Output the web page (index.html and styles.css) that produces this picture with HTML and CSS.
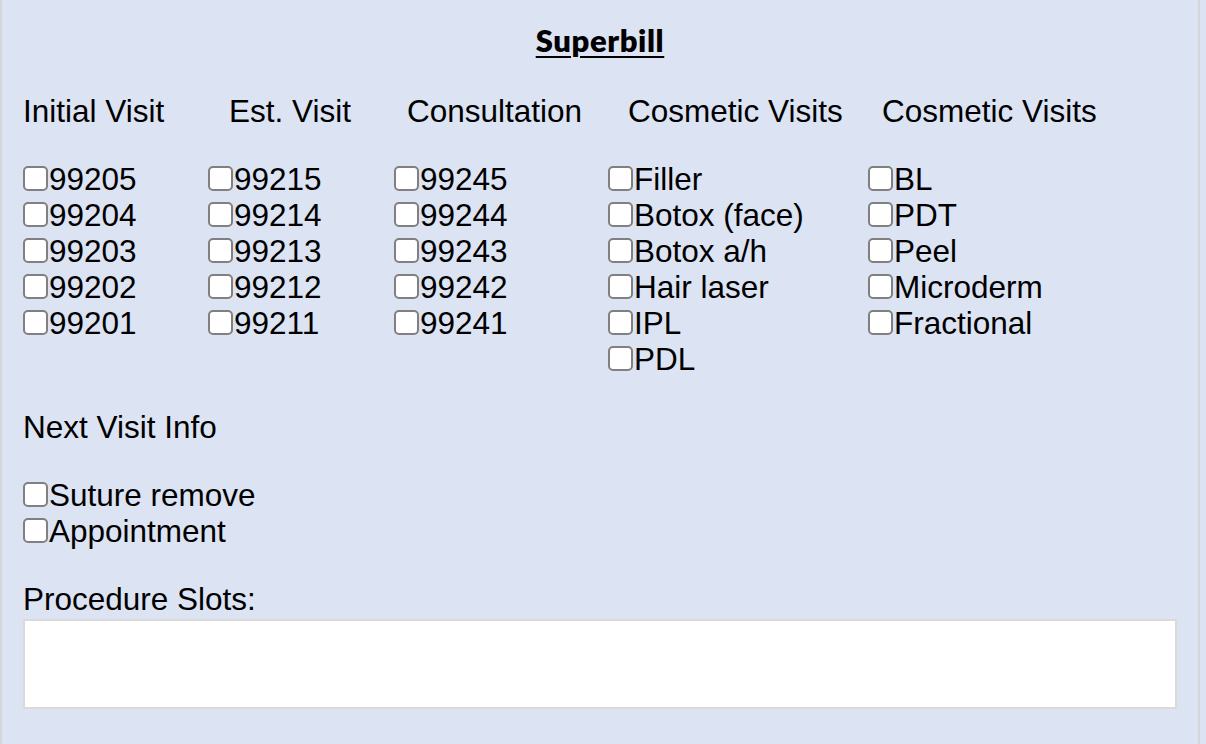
FILE: index.html
```html
<!DOCTYPE html>
<html lang="en">
<head>
  <meta charset="UTF-8">
  <meta name="viewport" content="width=device-width, initial-scale=1.0">
  <title>Superbill</title>
  <link rel="stylesheet" href="styles.css">
</head>
<body>
  <div class="panel">
    <h2 class="title">Superbill</h2>

    <!-- Visit codes -->
    <div class="heads">
      <div>Initial Visit</div>
      <div>Est. Visit</div>
      <div>Consultation</div>
      <div>Cosmetic Visits</div>
      <div>Cosmetic Visits</div>
    </div>

    <div class="codes">
      <div class="col">
        <label><input type="checkbox">99205</label>
        <label><input type="checkbox">99204</label>
        <label><input type="checkbox">99203</label>
        <label><input type="checkbox">99202</label>
        <label><input type="checkbox">99201</label>
      </div>
      <div class="col">
        <label><input type="checkbox">99215</label>
        <label><input type="checkbox">99214</label>
        <label><input type="checkbox">99213</label>
        <label><input type="checkbox">99212</label>
        <label><input type="checkbox">99211</label>
      </div>
      <div class="col">
        <label><input type="checkbox">99245</label>
        <label><input type="checkbox">99244</label>
        <label><input type="checkbox">99243</label>
        <label><input type="checkbox">99242</label>
        <label><input type="checkbox">99241</label>
      </div>
      <div class="col">
        <label><input type="checkbox">Filler</label>
        <label><input type="checkbox">Botox (face)</label>
        <label><input type="checkbox">Botox a/h</label>
        <label><input type="checkbox">Hair laser</label>
        <label><input type="checkbox">IPL</label>
        <label><input type="checkbox">PDL</label>
      </div>
      <div class="col">
        <label><input type="checkbox">BL</label>
        <label><input type="checkbox">PDT</label>
        <label><input type="checkbox">Peel</label>
        <label><input type="checkbox">Microderm</label>
        <label><input type="checkbox">Fractional</label>
      </div>
    </div>

    <!-- Next visit -->
    <div class="section">Next Visit Info</div>
    <div class="col next">
      <label><input type="checkbox">Suture remove</label>
      <label><input type="checkbox">Appointment</label>
    </div>

    <div class="section">Procedure Slots:</div>
    <textarea class="slots"></textarea>
  </div>
</body>
</html>
```

FILE: styles.css
```css
body {
  margin: 0;
  background-color: #dce3f2;
  font-family: "Liberation Sans", Arial, sans-serif;
  font-size: 31.5px;
  line-height: 36px;
  color: #000;
}
.panel {
  width: 1154px;
  min-height: 744px;
  padding: 22px 21px 0 21px;
  border-left: 2px solid #d4d6dc;
  border-right: 2px solid #d4d6dc;
  box-sizing: content-box;
}
.title {
  margin: 0;
  text-align: center;
  font-family: Lato, "Open Sans", sans-serif;
  font-weight: 800;
  font-size: 31px;
  letter-spacing: 0.6px;
  line-height: 36px;
  text-decoration: underline;
  text-underline-offset: 4px;
  text-decoration-thickness: 2px;
}
.heads {
  display: grid;
  grid-template-columns: 206px 178px 221px 254px auto;
  margin-top: 35px;
}
.codes {
  display: grid;
  grid-template-columns: 185px 186px 214px 260px auto;
  margin-top: 32px;
}
.col {
  display: flex;
  flex-direction: column;
}
.col label {
  display: flex;
  align-items: center;
  height: 36px;
}
.col input[type="checkbox"] {
  appearance: none;
  -webkit-appearance: none;
  width: 25px;
  height: 25px;
  margin: -2px 1px 0 0;
  border: 2px solid #808080;
  border-radius: 5px;
  background-color: #fff;
  box-sizing: border-box;
}
.section {
  margin-top: 32px;
}
.next {
  margin-top: 32px;
}
.slots {
  display: block;
  width: 1154px;
  height: 90px;
  margin-top: 2px;
  border: 2px solid #dadada;
  background-color: #fff;
  box-sizing: border-box;
  resize: none;
}
```
